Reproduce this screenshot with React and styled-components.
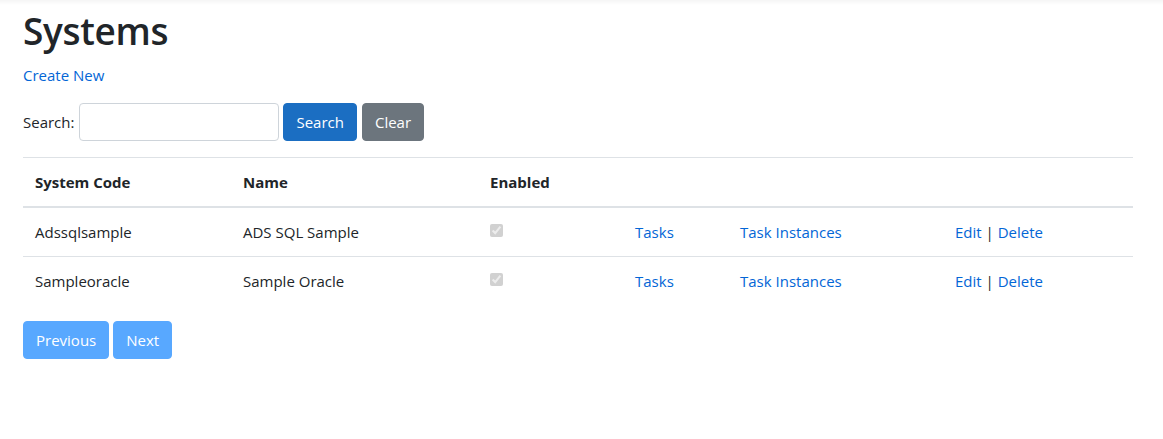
import React from "react";
import styled, { createGlobalStyle } from "styled-components";

const GlobalStyle = createGlobalStyle`
  html, body {
    margin: 0;
    padding: 0;
  }
  body {
    font-family: "Segoe UI", "Open Sans", "Noto Sans", sans-serif;
    font-size: 15px;
    line-height: 24px;
    color: #212529;
    background: linear-gradient(#f5f5f5, #ffffff 5px) no-repeat #fff;
  }
  * {
    box-sizing: border-box;
  }
`;

const Colors = {
  text: "#212529",
  link: "#0366d6",
  primary: "#1b6ec2",
  secondary: "#6c757d",
  border: "#dee2e6",
  pager: "#007bff",
};

const Container = styled.main`
  padding: 7px 30px 0 23px;
`;

const Title = styled.h1`
  margin: 0 0 8px;
  font-size: 37px;
  font-weight: 600;
  line-height: 48px;
  letter-spacing: -0.3px;
`;

const Para = styled.p`
  margin: 0 0 16px;
`;

const Link = styled.a`
  color: ${Colors.link};
  text-decoration: none;
  cursor: pointer;
`;

const SearchForm = styled.form`
  display: flex;
  align-items: center;
  gap: 4px;
  margin-bottom: 16px;
`;

const Label = styled.label`
  margin-right: 1px;
`;

const Input = styled.input`
  width: 200px;
  height: 38px;
  border: 1px solid #ced4da;
  border-radius: 4px;
  padding: 6px 12px;
  font: inherit;
`;

const Button = styled.button`
  height: 38px;
  padding: 6px 12px;
  font: inherit;
  font-size: 15px;
  line-height: 24px;
  color: #fff;
  border: 1px solid ${(p) => p.$bg};
  background: ${(p) => p.$bg};
  border-radius: 4px;
  opacity: ${(p) => (p.disabled ? 0.65 : 1)};
  margin-left: ${(p) => p.$ml || 0}px;
`;

const Table = styled.table`
  width: 1110px;
  border-collapse: collapse;
  table-layout: fixed;
  margin-bottom: 16px;
`;

const Th = styled.th`
  width: ${(p) => p.$w}px;
  text-align: left;
  font-weight: 700;
  padding: 12px;
  border-top: 1px solid ${Colors.border};
  border-bottom: 2px solid ${Colors.border};
  vertical-align: bottom;
`;

const Td = styled.td`
  padding: 12px;
  border-top: 1px solid ${Colors.border};
  vertical-align: top;
`;

const Check = styled.input`
  margin: 0;
  width: 13px;
  height: 13px;
  vertical-align: 1px;
`;

const Sep = styled.span`
  color: ${Colors.text};
`;

const Pager = styled.div`
  display: flex;
  gap: 4px;
`;

const columns = [
  { label: "System Code", w: 208 },
  { label: "Name", w: 247 },
  { label: "Enabled", w: 145 },
  { label: "", w: 105 },
  { label: "", w: 215 },
  { label: "", w: 190 },
];

const systems = [
  { code: "Adssqlsample", name: "ADS SQL Sample", enabled: true },
  { code: "Sampleoracle", name: "Sample Oracle", enabled: true },
];

export default function App() {
  return (
    <>
      <GlobalStyle />
      <Container>
        <Title>Systems</Title>
        <Para>
          <Link>Create New</Link>
        </Para>
        <SearchForm onSubmit={(e) => e.preventDefault()}>
          <Label>Search:</Label>
          <Input type="text" />
          <Button type="submit" $bg={Colors.primary}>
            Search
          </Button>
          <Button type="button" $bg={Colors.secondary} $ml={1}>
            Clear
          </Button>
        </SearchForm>
        <Table>
          <thead>
            <tr>
              {columns.map((c, i) => (
                <Th key={i} $w={c.w}>
                  {c.label}
                </Th>
              ))}
            </tr>
          </thead>
          <tbody>
            {systems.map((s) => (
              <tr key={s.code}>
                <Td>{s.code}</Td>
                <Td>{s.name}</Td>
                <Td>
                  <Check type="checkbox" checked={s.enabled} disabled readOnly />
                </Td>
                <Td>
                  <Link>Tasks</Link>
                </Td>
                <Td>
                  <Link>Task Instances</Link>
                </Td>
                <Td>
                  <Link>Edit</Link> <Sep>|</Sep> <Link>Delete</Link>
                </Td>
              </tr>
            ))}
          </tbody>
        </Table>
        <Pager>
          <Button $bg={Colors.pager} disabled>
            Previous
          </Button>
          <Button $bg={Colors.pager} disabled>
            Next
          </Button>
        </Pager>
      </Container>
    </>
  );
}
